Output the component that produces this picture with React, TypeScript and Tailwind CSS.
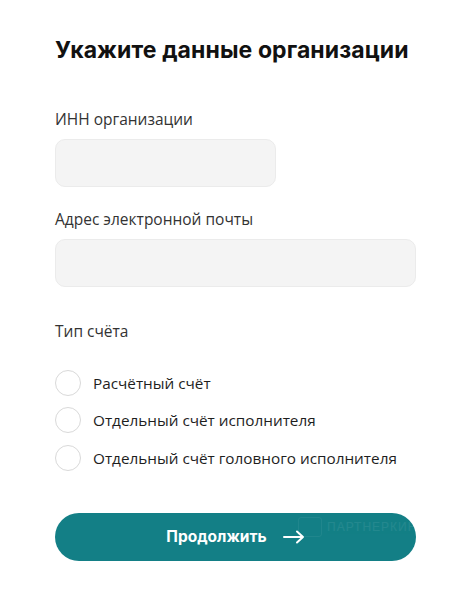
import React from "react";

const options = [
  "Расчётный счёт",
  "Отдельный счёт исполнителя",
  "Отдельный счёт головного исполнителя",
];

export default function App() {
  return (
    <div className="w-[465px] h-[590px] bg-white font-['Open_Sans',sans-serif] text-[#222]">
      <div className="pl-[55px] pr-[50px] pt-[36px]">
        <h1 className="font-['Inter',sans-serif] font-bold text-[23px] leading-[28px] text-[#111] tracking-[0.1px]">
          Укажите данные организации
        </h1>

        <div className="mt-[44px] text-[15.5px] leading-[22px] text-[#333]">ИНН организации</div>
        <div className="mt-[9px] w-[221px] h-[48px] rounded-[10px] bg-[#f4f4f4] border border-[#ebebeb]" />

        <div className="mt-[21px] text-[15.5px] leading-[22px] text-[#333]">Адрес электронной почты</div>
        <div className="mt-[9px] w-[361px] h-[48px] rounded-[10px] bg-[#f4f4f4] border border-[#ebebeb]" />

        <div className="mt-[33px] text-[15.5px] leading-[22px] text-[#333]">Тип счёта</div>

        <div className="mt-[27px] flex flex-col gap-[10.5px]">
          {options.map((o) => (
            <label key={o} className="flex items-center gap-[12px] h-[27px]">
              <span className="w-[26px] h-[26px] rounded-full border border-[#d9d9d9] bg-white shrink-0" />
              <span className="text-[15.3px] leading-[22px] text-[#1e1e1e]">{o}</span>
            </label>
          ))}
        </div>

        <button className="relative mt-[42px] w-[361px] h-[48px] rounded-full bg-[#137f86] flex items-center justify-center gap-[16px] text-white overflow-hidden">
          <span className="font-['Inter',sans-serif] font-bold text-[15.5px]">Продолжить</span>
          <svg width="22" height="14" viewBox="0 0 22 14" fill="none">
            <path d="M1 7h19M14 1.5L20 7l-6 5.5" stroke="white" strokeWidth="2" strokeLinecap="round" strokeLinejoin="round" />
          </svg>
          <span className="absolute left-[243px] top-[4px] w-[24px] h-[20px] border border-white opacity-[0.06] rounded-[3px]" />
          <span className="absolute left-[272px] top-[5px] text-[12px] tracking-[1px] text-white opacity-[0.07] font-['Liberation_Sans',sans-serif]">
            ПАРТНЕРКИН
          </span>
        </button>
      </div>
    </div>
  );
}
